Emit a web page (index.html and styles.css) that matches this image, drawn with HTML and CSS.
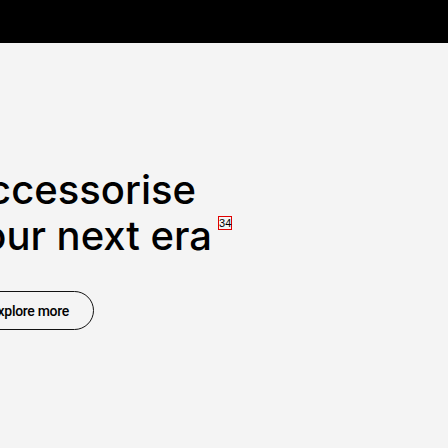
FILE: index.html
```html
<!DOCTYPE html>
<html lang="en">
<head>
<meta charset="utf-8">
<title>Accessorise your next era</title>
<link rel="stylesheet" href="styles.css">
</head>
<body>
<header class="topbar"></header>
<main class="hero">
  <div class="hero-content">
    <h1 class="hero-title">Accessorise<br>your next era<sup class="note">34</sup></h1>
    <a class="cta" href="#">Explore more</a>
  </div>
</main>
</body>
</html>
```
FILE: styles.css
```css
html, body {
  margin: 0;
  padding: 0;
  background: #f4f4f4;
  overflow: hidden;
}
.topbar {
  height: 43px;
  background: #000;
}
.hero {
  padding-top: 124px;
}
.hero-content {
  margin-left: -40px;
  display: flex;
  flex-direction: column;
  align-items: flex-start;
}
.hero-title {
  margin: 0;
  font-family: Inter, "Noto Sans", sans-serif;
  font-weight: 500;
  font-size: 40px;
  line-height: 46px;
  color: #000;
  letter-spacing: 0;
}
.note {
  font-family: "Liberation Sans", Arial, sans-serif;
  font-weight: 400;
  font-size: 11px;
  line-height: 11px;
  border: 1px solid #e00000;
  padding: 0;
  margin-left: 6px;
  vertical-align: 23px;
}
.cta {
  margin-top: 32px;
  margin-left: 5px;
  display: inline-flex;
  align-items: center;
  height: 39px;
  box-sizing: border-box;
  padding: 0 24px;
  border: 1px solid #111;
  border-radius: 20px;
  font-family: Roboto, "Noto Sans", sans-serif;
  font-weight: 500;
  font-size: 14px;
  letter-spacing: -0.3px;
  color: #000;
  text-decoration: none;
}
```
